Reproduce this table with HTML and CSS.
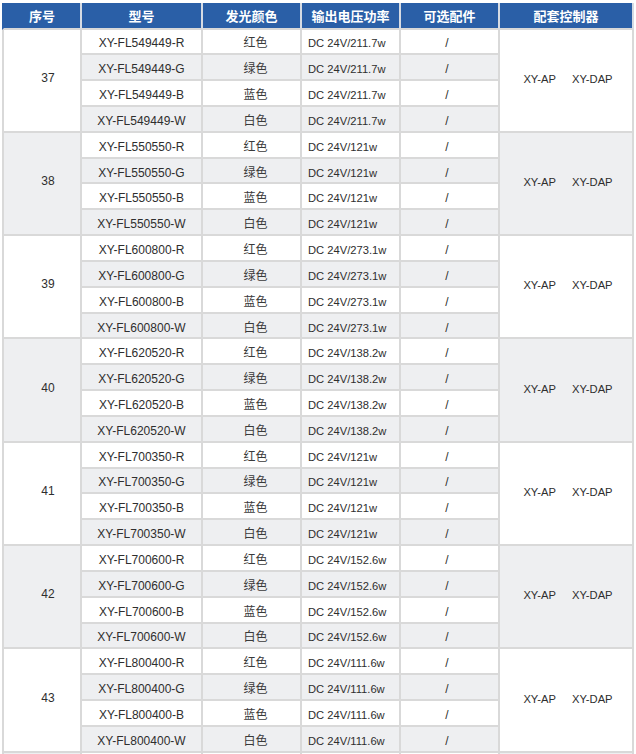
FILE: index.html
```html
<!DOCTYPE html>
<html lang="zh-CN">
<head>
<meta charset="utf-8">
<title>型号列表</title>
<link rel="stylesheet" href="styles.css">
</head>
<body>
<table class="spec">
  <colgroup>
    <col class="c-seq"><col class="c-model"><col class="c-color"><col class="c-power"><col class="c-opt"><col class="c-ctrl">
  </colgroup>
  <thead>
    <tr><th class="first">序号</th><th>型号</th><th>发光颜色</th><th>输出电压功率</th><th>可选配件</th><th>配套控制器</th></tr>
  </thead>
  <tbody>
    <tr><td class="seq" rowspan="4">37</td><td>XY-FL549449-R</td><td class="clr">红色</td><td class="pw">DC 24V/211.7w</td><td class="opt">/</td><td class="ctrl" rowspan="4"><span>XY-AP</span><span class="gap">XY-DAP</span></td></tr>
    <tr class="alt"><td>XY-FL549449-G</td><td class="clr">绿色</td><td class="pw">DC 24V/211.7w</td><td class="opt">/</td></tr>
    <tr><td>XY-FL549449-B</td><td class="clr">蓝色</td><td class="pw">DC 24V/211.7w</td><td class="opt">/</td></tr>
    <tr class="alt"><td>XY-FL549449-W</td><td class="clr">白色</td><td class="pw">DC 24V/211.7w</td><td class="opt">/</td></tr>

    <tr><td class="seq grey" rowspan="4">38</td><td>XY-FL550550-R</td><td class="clr">红色</td><td class="pw">DC 24V/121w</td><td class="opt">/</td><td class="ctrl grey" rowspan="4"><span>XY-AP</span><span class="gap">XY-DAP</span></td></tr>
    <tr class="alt"><td>XY-FL550550-G</td><td class="clr">绿色</td><td class="pw">DC 24V/121w</td><td class="opt">/</td></tr>
    <tr><td>XY-FL550550-B</td><td class="clr">蓝色</td><td class="pw">DC 24V/121w</td><td class="opt">/</td></tr>
    <tr class="alt"><td>XY-FL550550-W</td><td class="clr">白色</td><td class="pw">DC 24V/121w</td><td class="opt">/</td></tr>

    <tr><td class="seq" rowspan="4">39</td><td>XY-FL600800-R</td><td class="clr">红色</td><td class="pw">DC 24V/273.1w</td><td class="opt">/</td><td class="ctrl" rowspan="4"><span>XY-AP</span><span class="gap">XY-DAP</span></td></tr>
    <tr class="alt"><td>XY-FL600800-G</td><td class="clr">绿色</td><td class="pw">DC 24V/273.1w</td><td class="opt">/</td></tr>
    <tr><td>XY-FL600800-B</td><td class="clr">蓝色</td><td class="pw">DC 24V/273.1w</td><td class="opt">/</td></tr>
    <tr class="alt"><td>XY-FL600800-W</td><td class="clr">白色</td><td class="pw">DC 24V/273.1w</td><td class="opt">/</td></tr>

    <tr><td class="seq grey" rowspan="4">40</td><td>XY-FL620520-R</td><td class="clr">红色</td><td class="pw">DC 24V/138.2w</td><td class="opt">/</td><td class="ctrl grey" rowspan="4"><span>XY-AP</span><span class="gap">XY-DAP</span></td></tr>
    <tr class="alt"><td>XY-FL620520-G</td><td class="clr">绿色</td><td class="pw">DC 24V/138.2w</td><td class="opt">/</td></tr>
    <tr><td>XY-FL620520-B</td><td class="clr">蓝色</td><td class="pw">DC 24V/138.2w</td><td class="opt">/</td></tr>
    <tr class="alt"><td>XY-FL620520-W</td><td class="clr">白色</td><td class="pw">DC 24V/138.2w</td><td class="opt">/</td></tr>

    <tr><td class="seq" rowspan="4">41</td><td>XY-FL700350-R</td><td class="clr">红色</td><td class="pw">DC 24V/121w</td><td class="opt">/</td><td class="ctrl" rowspan="4"><span>XY-AP</span><span class="gap">XY-DAP</span></td></tr>
    <tr class="alt"><td>XY-FL700350-G</td><td class="clr">绿色</td><td class="pw">DC 24V/121w</td><td class="opt">/</td></tr>
    <tr><td>XY-FL700350-B</td><td class="clr">蓝色</td><td class="pw">DC 24V/121w</td><td class="opt">/</td></tr>
    <tr class="alt"><td>XY-FL700350-W</td><td class="clr">白色</td><td class="pw">DC 24V/121w</td><td class="opt">/</td></tr>

    <tr><td class="seq grey" rowspan="4">42</td><td>XY-FL700600-R</td><td class="clr">红色</td><td class="pw">DC 24V/152.6w</td><td class="opt">/</td><td class="ctrl grey" rowspan="4"><span>XY-AP</span><span class="gap">XY-DAP</span></td></tr>
    <tr class="alt"><td>XY-FL700600-G</td><td class="clr">绿色</td><td class="pw">DC 24V/152.6w</td><td class="opt">/</td></tr>
    <tr><td>XY-FL700600-B</td><td class="clr">蓝色</td><td class="pw">DC 24V/152.6w</td><td class="opt">/</td></tr>
    <tr class="alt"><td>XY-FL700600-W</td><td class="clr">白色</td><td class="pw">DC 24V/152.6w</td><td class="opt">/</td></tr>

    <tr><td class="seq" rowspan="4">43</td><td>XY-FL800400-R</td><td class="clr">红色</td><td class="pw">DC 24V/111.6w</td><td class="opt">/</td><td class="ctrl" rowspan="4"><span>XY-AP</span><span class="gap">XY-DAP</span></td></tr>
    <tr class="alt"><td>XY-FL800400-G</td><td class="clr">绿色</td><td class="pw">DC 24V/111.6w</td><td class="opt">/</td></tr>
    <tr><td>XY-FL800400-B</td><td class="clr">蓝色</td><td class="pw">DC 24V/111.6w</td><td class="opt">/</td></tr>
    <tr class="alt"><td>XY-FL800400-W</td><td class="clr">白色</td><td class="pw">DC 24V/111.6w</td><td class="opt">/</td></tr>

    <tr class="tail"><td class="seq grey"></td><td></td><td class="clr"></td><td class="pw"></td><td class="opt"></td><td class="ctrl grey"></td></tr>
  </tbody>
</table>
</body>
</html>
```
FILE: styles.css
```css
html, body {
  margin: 0;
  padding: 0;
  background: #ffffff;
}

body {
  font-family: "Liberation Sans", Arial, "Noto Sans CJK SC", sans-serif;
  font-size: 12px;
  color: #2e2e2e;
}

.spec {
  border-collapse: separate;
  border-spacing: 0;
  table-layout: fixed;
  width: 632px;
  margin: 3px 0 0 2px;
}

.c-seq { width: 80px; }
.c-model { width: 121px; }
.c-color { width: 99px; }
.c-power { width: 99px; }
.c-opt { width: 99px; }
.c-ctrl { width: 134px; }

.spec th {
  background: #2a5fa7;
  color: #ffffff;
  font-family: "Liberation Sans", Arial, "Noto Sans CJK SC", sans-serif;
  font-size: 13px;
  font-weight: bold;
  height: 24.5px;
  padding: 0;
  text-align: center;
  vertical-align: middle;
  border-right: 2px solid #d6dbe3;
  border-bottom: 2px solid #d8d8d8;
}

.spec th.first {
  border-left: 2px solid #2a5fa7;
}

.spec td {
  height: 19.83px;
  padding: 4px 0 0 0;
  text-align: center;
  vertical-align: middle;
  white-space: nowrap;
  border-right: 2px solid #d9d9d9;
  border-bottom: 2px solid #d9d9d9;
  background: #ffffff;
}

.spec tr.alt td {
  background: #eeeff1;
}

.spec td.seq {
  border-left: 2px solid #d9d9d9;
  padding: 0 0 5px 12px;
}

.spec td.clr {
  height: 22.83px;
  padding: 1px 0 0 8px;
  color: #3a3a3a;
}

.spec td.ctrl {
  padding: 0 0 3px 4px;
  font-size: 11.2px;
}

.spec td.grey {
  background: #eeeff1;
}

.spec td.pw {
  text-align: left;
  padding-left: 6px;
  font-size: 11.2px;
}

.spec td.opt {
  padding-right: 5px;
}

.gap {
  margin-left: 16px;
}

.spec tr.tail td {
  height: 20px;
}
```
